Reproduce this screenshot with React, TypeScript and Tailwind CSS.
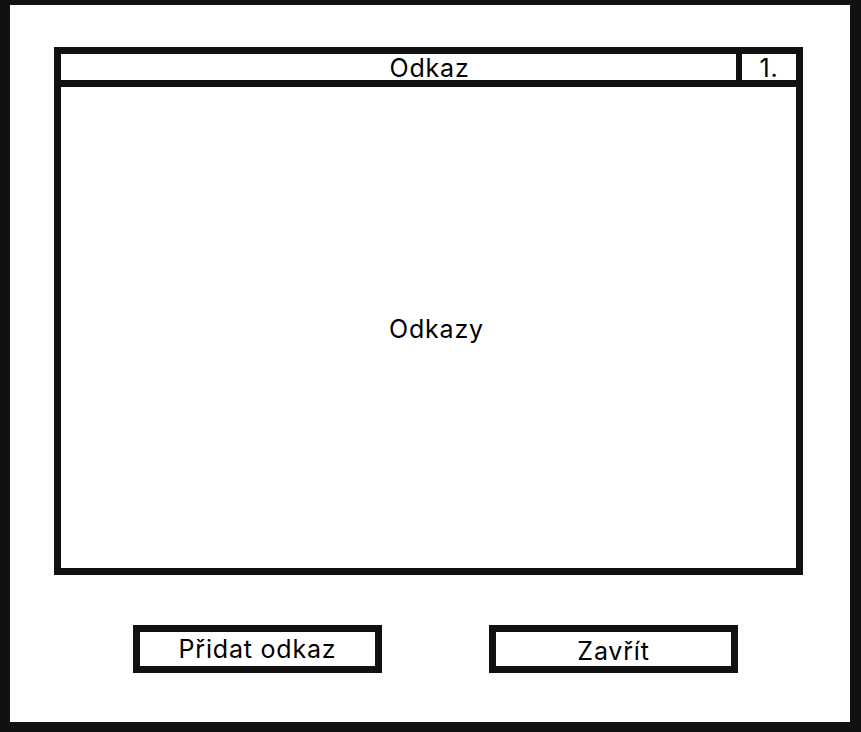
export default function App() {
  return (
    <div
      className="h-[732px] w-[861px] border-t-[5px] border-r-[11px] border-b-[10px] border-l-[10px] border-[#111] bg-white text-[25px] tracking-[0.8px] text-black"
      style={{ fontFamily: 'Inter, "Noto Sans", sans-serif' }}
    >
      <div className="ml-[44px] mt-[42px] flex h-[528px] w-[749px] flex-col border-[7px] border-[#111]">
        <div className="flex h-[33px] border-b-[7px] border-[#111]">
          <div className="flex flex-1 items-center justify-center pt-[3px] pl-[62px] leading-none">Odkaz</div>
          <div className="flex w-[60px] items-center justify-center border-l-[6px] border-[#111] pt-[3px] leading-none">
            1.
          </div>
        </div>
        <div className="flex flex-1 items-center justify-center pl-[16px] pt-[4px]">Odkazy</div>
      </div>
      <div className="mt-[50px] flex">
        <button className="ml-[123px] flex h-[48px] w-[249px] items-center justify-center border-[7px] border-[#111] pt-[1px] leading-none">
          Přidat odkaz
        </button>
        <button className="ml-[107px] flex h-[48px] w-[249px] items-center justify-center border-[7px] border-[#111] pt-[4px] leading-none">
          Zavřít
        </button>
      </div>
    </div>
  )
}
